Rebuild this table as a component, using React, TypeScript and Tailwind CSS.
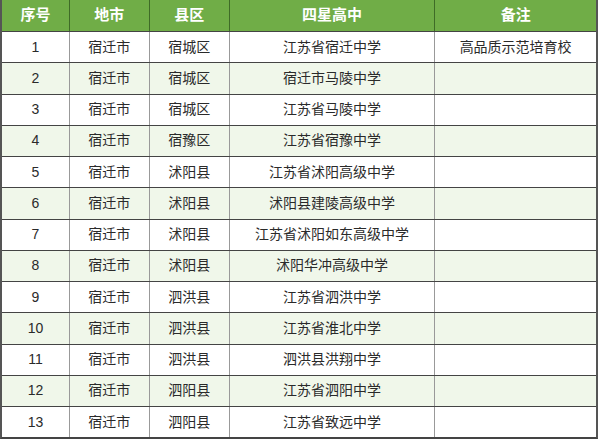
import React from "react";

const rows = [
  ["1", "宿迁市", "宿城区", "江苏省宿迁中学", "高品质示范培育校"],
  ["2", "宿迁市", "宿城区", "宿迁市马陵中学", ""],
  ["3", "宿迁市", "宿城区", "江苏省马陵中学", ""],
  ["4", "宿迁市", "宿豫区", "江苏省宿豫中学", ""],
  ["5", "宿迁市", "沭阳县", "江苏省沭阳高级中学", ""],
  ["6", "宿迁市", "沭阳县", "沭阳县建陵高级中学", ""],
  ["7", "宿迁市", "沭阳县", "江苏省沭阳如东高级中学", ""],
  ["8", "宿迁市", "沭阳县", "沭阳华冲高级中学", ""],
  ["9", "宿迁市", "泗洪县", "江苏省泗洪中学", ""],
  ["10", "宿迁市", "泗洪县", "江苏省淮北中学", ""],
  ["11", "宿迁市", "泗洪县", "泗洪县洪翔中学", ""],
  ["12", "宿迁市", "泗阳县", "江苏省泗阳中学", ""],
  ["13", "宿迁市", "泗阳县", "江苏省致远中学", ""],
];

const widths = ["w-[68px]", "w-[80px]", "w-[80px]", "w-[206px]", "w-[161px]"];
const headers = ["序号", "地市", "县区", "四星高中", "备注"];

export default function App() {
  return (
    <div
      className="w-[600px] h-[439px] bg-white overflow-hidden"
      style={{ fontFamily: '"Liberation Sans", "Noto Sans CJK SC", sans-serif' }}
    >
      <div className="w-[598px] border-l-2 border-r-2 border-b-2 border-l-[#555] border-r-[#555] border-b-[#444]">
        <div className="flex h-[31px] bg-[#70ad47] text-white font-bold text-[15px]">
          {headers.map((h, i) => (
            <div
              key={i}
              className={`${widths[i]} flex items-center justify-center ${i < 4 ? "border-r border-r-[#3f6b27]" : ""}`}
            >
              {h}
            </div>
          ))}
        </div>
        {rows.map((r, ri) => (
          <div
            key={ri}
            className={`flex h-[31.25px] border-t border-t-[#444] text-[14px] text-[#2a2a2a] ${ri % 2 === 1 ? "bg-[#f0f7ea]" : "bg-white"}`}
          >
            {r.map((c, i) => (
              <div
                key={i}
                className={`${widths[i]} flex items-center justify-center ${i < 4 ? "border-r border-r-[#999]" : ""}`}
              >
                {c}
              </div>
            ))}
          </div>
        ))}
      </div>
    </div>
  );
}
